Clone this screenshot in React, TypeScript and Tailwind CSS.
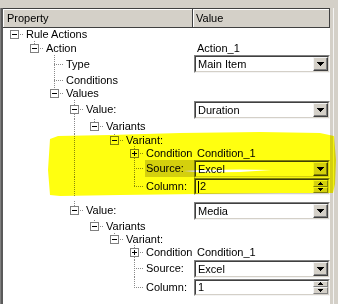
import { FC, ReactNode } from "react";

type RowKind =
  | { type: "none" }
  | { type: "text"; value: string }
  | { type: "combo"; value: string }
  | { type: "spin"; value: string; caret?: boolean };

interface Row {
  label: string;
  level: number;
  box?: "minus" | "plus";
  last: boolean;
  through: number[];
  h: number;
  pt?: number;
  selected?: boolean;
  kind: RowKind;
}

const rows: Row[] = [
  { label: "Rule Actions", level: 0, box: "minus", last: true, through: [], h: 13, kind: { type: "none" } },
  { label: "Action", level: 1, box: "minus", last: true, through: [], h: 14, kind: { type: "text", value: "Action_1" } },
  { label: "Type", level: 2, last: false, through: [], h: 18, kind: { type: "combo", value: "Main Item" } },
  { label: "Conditions", level: 2, last: false, through: [], h: 14, kind: { type: "none" } },
  { label: "Values", level: 2, box: "minus", last: true, through: [], h: 13, kind: { type: "none" } },
  { label: "Value:", level: 3, box: "minus", last: false, through: [], h: 19, kind: { type: "combo", value: "Duration" } },
  { label: "Variants", level: 4, box: "minus", last: true, through: [3], h: 15, kind: { type: "none" } },
  { label: "Variant:", level: 5, box: "minus", last: true, through: [3], h: 12, kind: { type: "none" } },
  { label: "Condition", level: 6, box: "plus", last: false, through: [3], h: 14, kind: { type: "text", value: "Condition_1" } },
  { label: "Source:", level: 6, last: false, through: [3], h: 17, selected: true, kind: { type: "combo", value: "Excel" } },
  { label: "Column:", level: 6, last: true, through: [3], h: 19, kind: { type: "spin", value: "2", caret: true } },
  { label: "Value:", level: 3, box: "minus", last: true, through: [], h: 24, pt: 5, kind: { type: "combo", value: "Media" } },
  { label: "Variants", level: 4, box: "minus", last: true, through: [], h: 13, kind: { type: "none" } },
  { label: "Variant:", level: 5, box: "minus", last: true, through: [], h: 12, kind: { type: "none" } },
  { label: "Condition", level: 6, box: "plus", last: false, through: [], h: 15, kind: { type: "text", value: "Condition_1" } },
  { label: "Source:", level: 6, last: false, through: [], h: 17, kind: { type: "combo", value: "Excel" } },
  { label: "Column:", level: 6, last: true, through: [], h: 20, kind: { type: "spin", value: "1" } },
];

// tree guides drawn per row; x values are relative to the property cell (which starts at x=3)
const TreeLines: FC<{ row: Row; h: number }> = ({ row, h }) => {
  const w = 22 + row.level * 20;
  const cx = 11 + row.level * 20;
  const cy = Math.floor(h / 2);
  const dot = { stroke: "#8a8a8a", strokeWidth: 1, strokeDasharray: "1 1", shapeRendering: "crispEdges" as const };
  return (
    <svg width={w} height={h} className="shrink-0">
      {row.through.map((lv) => (
        <line key={lv} x1={11 + lv * 20 + 0.5} y1={0} x2={11 + lv * 20 + 0.5} y2={h} {...dot} />
      ))}
      {row.level > 0 && (
        <line x1={cx + 0.5} y1={0} x2={cx + 0.5} y2={row.last ? cy : h} {...dot} />
      )}
      <line x1={cx} y1={cy + 0.5} x2={w - 1} y2={cy + 0.5} {...dot} />
      {row.box && (
        <g shapeRendering="crispEdges">
          <rect x={cx - 4 + 0.5} y={cy - 4 + 0.5} width={8} height={8} fill="#fff" stroke="#808080" />
          <line x1={cx - 2} y1={cy + 0.5} x2={cx + 3} y2={cy + 0.5} stroke="#000" />
          {row.box === "plus" && (
            <line x1={cx + 0.5} y1={cy - 2} x2={cx + 0.5} y2={cy + 3} stroke="#000" />
          )}
        </g>
      )}
    </svg>
  );
};

const Arrow: FC<{ up?: boolean; size?: "big" | "small" }> = ({ up, size = "big" }) =>
  size === "big" ? (
    <svg width="7" height="4" viewBox="0 0 7 4" shapeRendering="crispEdges">
      <path d="M0 0h7v1H0zM1 1h5v1H1zM2 2h3v1H2zM3 3h1v1H3z" fill="#000" />
    </svg>
  ) : (
    <svg width="5" height="3" viewBox="0 0 5 3" shapeRendering="crispEdges">
      {up ? (
        <path d="M2 0h1v1H2zM1 1h3v1H1zM0 2h5v1H0z" fill="#000" />
      ) : (
        <path d="M0 0h5v1H0zM1 1h3v1H1zM2 2h1v1H2z" fill="#000" />
      )}
    </svg>
  );

const Sunken: FC<{ children: ReactNode; h: number }> = ({ children, h }) => (
  <div
    className="flex w-full border border-t-[#808080] border-l-[#808080] border-b-[#f4f4f4] border-r-[#f4f4f4]"
    style={{ height: h }}
  >
    <div className="flex flex-1 items-stretch border border-t-[#404040] border-l-[#404040] border-b-[#d4d0c8] border-r-[#d4d0c8] bg-white">
      {children}
    </div>
  </div>
);

const Combo: FC<{ value: string }> = ({ value }) => (
  <Sunken h={18}>
    <span className="flex-1 pl-[2px] leading-[14px]">{value}</span>
    <div className="flex w-[15px] items-center justify-center border border-t-[#f4f4f4] border-l-[#f4f4f4] border-b-[#404040] border-r-[#404040] bg-[#d4d0c8] shadow-[inset_-1px_-1px_0_#808080]">
      <Arrow />
    </div>
  </Sunken>
);

const Spin: FC<{ value: string; caret?: boolean }> = ({ value, caret }) => (
  <Sunken h={17}>
    <span className="flex flex-1 items-center pl-[2px] leading-[13px]">
      {caret && <span className="mr-[1px] inline-block h-[12px] w-[1px] bg-black" />}
      {value}
    </span>
    <div className="flex w-[15px] flex-col">
      <div className="flex flex-1 items-center justify-center border border-t-[#f4f4f4] border-l-[#f4f4f4] border-b-[#808080] border-r-[#808080] bg-[#d4d0c8]">
        <Arrow up size="small" />
      </div>
      <div className="flex flex-1 items-center justify-center border border-t-[#f4f4f4] border-l-[#f4f4f4] border-b-[#808080] border-r-[#808080] bg-[#d4d0c8]">
        <Arrow size="small" />
      </div>
    </div>
  </Sunken>
);

const PropertyRow: FC<{ row: Row }> = ({ row }) => {
  const inner = row.h - (row.pt ?? 0);
  return (
    <div className="flex" style={{ height: row.h, paddingTop: row.pt ?? 0 }}>
      <div className="flex w-[191px] items-center">
        <TreeLines row={row} h={inner} />
        <span
          className={`flex h-full flex-1 items-center pl-[1px] ${row.selected ? "bg-[#d4d0c8]" : ""}`}
        >
          {row.label}
        </span>
      </div>
      <div className="flex w-[136px] items-center">
        {row.kind.type === "text" && <span className="pl-[3px]">{row.kind.value}</span>}
        {row.kind.type === "combo" && <Combo value={row.kind.value} />}
        {row.kind.type === "spin" && <Spin value={row.kind.value} caret={row.kind.caret} />}
      </div>
    </div>
  );
};

const Highlight: FC = () => (
  <svg
    width="338"
    height="304"
    className="pointer-events-none absolute left-0 top-0 mix-blend-multiply"
  >
    <path
      fillRule="evenodd"
      fill="#ffff10"
      d="M50 139 L58 136 L110 135 L180 133 L260 132 L320 133 L334 136 L336 160 L335 184 L333 193 L280 193 L200 194 L120 195 L60 196 L50 195 L48 170 Z
         M183 171 L200 170 L240 169.5 L272 170 L240 172 L200 172.5 Z"
    />
  </svg>
);

const App: FC = () => {
  return (
    <div
      className="relative h-[304px] w-[338px] overflow-hidden bg-[#d4d0c8] text-[11px] text-black"
      style={{ fontFamily: '"Liberation Sans", Arial, sans-serif' }}
    >
      <div className="h-[8px]" />
      <div className="flex h-[296px]">
        <div className="w-[3px] bg-[#5a5a5a] shadow-[inset_1px_0_0_#808080]" />
        <div className="flex w-[327px] flex-col bg-white">
          <div className="flex h-[20px] border-t border-b border-[#404040] bg-[#d4d0c8]">
            <div className="flex w-[190px] items-center border-r border-[#404040] pl-[4px] shadow-[inset_1px_1px_0_#fff]">
              Property
            </div>
            <div className="flex flex-1 items-center border-r border-[#404040] pl-[3px] shadow-[inset_1px_1px_0_#fff]">
              Value
            </div>
          </div>
          <div className="flex flex-col">
            {rows.map((r, i) => (
              <PropertyRow key={i} row={r} />
            ))}
          </div>
        </div>
        <div className="flex w-[8px] bg-[#d4d0c8]">
          <div className="ml-[3px] w-[1px] bg-[#f4f4f4]" />
        </div>
      </div>
      <Highlight />
    </div>
  );
};

export default App;
